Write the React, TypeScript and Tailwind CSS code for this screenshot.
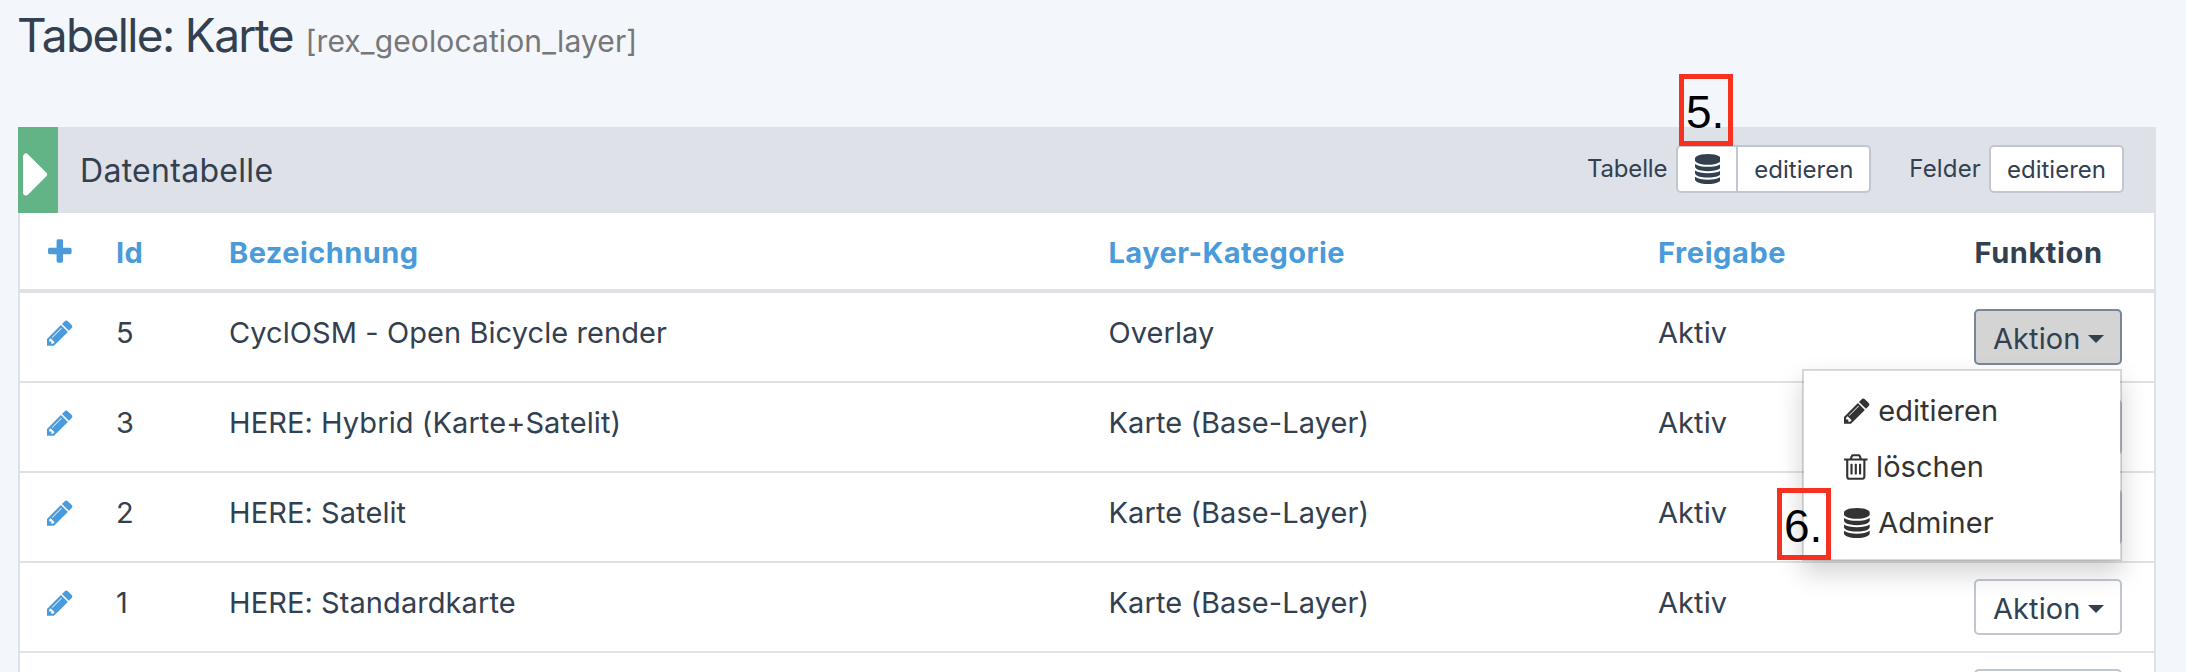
import React from "react";

function Glyph({ d, box, className }: { d: string; box: string; className: string }) {
  return (
    <svg viewBox={box} className={className} fill="currentColor" aria-hidden="true">
      <path d={d} />
    </svg>
  );
}

const PENCIL =
  "M363 1536l91-91-235-235-91 91v107h128v128h107zM886 608q0-22-22-22-10 0-17 7l-542 542q-7 7-7 17 0 22 22 22 10 0 17-7l542-542q7-7 7-17zM832 416l416 416-832 832h-416v-416zM1515 512q0 53-37 90l-166 166-416-416 166-165q36-38 90-38 53 0 91 38l235 234q37 39 37 91z";
const TRASH =
  "M704 736v576q0 14-9 23t-23 9h-64q-14 0-23-9t-9-23v-576q0-14 9-23t23-9h64q14 0 23 9t9 23zm256 0v576q0 14-9 23t-23 9h-64q-14 0-23-9t-9-23v-576q0-14 9-23t23-9h64q14 0 23 9t9 23zm256 0v576q0 14-9 23t-23 9h-64q-14 0-23-9t-9-23v-576q0-14 9-23t23-9h64q14 0 23 9t9 23zm128 724v-948h-896v948q0 22 7 40.500t14.500 27 10.500 8.500h832q3 0 10.500-8.500t14.500-27 7-40.500zm-672-1076h448l-48-117q-7-9-17-11h-317q-10 2-17 11zm928 32v64q0 14-9 23t-23 9h-96v948q0 83-47 143.500t-113 60.500h-832q-66 0-113-58.500t-47-141.500v-952h-96q-14 0-23-9t-9-23v-64q0-14 9-23t23-9h309l70-167q15-37 54-63t79-26h320q40 0 79 26t54 63l70 167h309q14 0 23 9t9 23z";
const DATABASE =
  "M896 768q237 0 443-43t325-127v170q0 69-103 128t-280 93.500-385 34.500-385-34.500-280-93.500-103-128v-170q119 84 325 127t443 43zm0 768q237 0 443-43t325-127v170q0 69-103 128t-280 93.500-385 34.500-385-34.500-280-93.500-103-128v-170q119 84 325 127t443 43zm0-384q237 0 443-43t325-127v170q0 69-103 128t-280 93.500-385 34.500-385-34.500-280-93.500-103-128v-170q119 84 325 127t443 43zm0-1152q208 0 385 34.500t280 93.500 103 128v128q0 69-103 128t-280 93.500-385 34.500-385-34.500-280-93.500-103-128v-128q0-69 103-128t280-93.500 385-34.500z";
const PLUS =
  "M1600 736v192q0 40-28 68t-68 28h-416v416q0 40-28 68t-68 28h-192q-40 0-68-28t-28-68v-416h-416q-40 0-68-28t-28-68v-192q0-40 28-68t68-28h416v-416q0-40 28-68t68-28h192q40 0 68 28t28 68v416h416q40 0 68 28t28 68z";

const Pencil = () => <Glyph d={PENCIL} box="0 0 1536 1792" className="h-[30px] w-[25.7px] shrink-0" />;
const Trash = () => <Glyph d={TRASH} box="192 0 1408 1792" className="h-[30px] w-[23.6px] shrink-0" />;
const Database = () => <Glyph d={DATABASE} box="128 0 1536 1792" className="h-[30px] w-[25.7px] shrink-0" />;
const Plus = () => <Glyph d={PLUS} box="192 0 1408 1792" className="h-[30px] w-[23.6px] shrink-0" />;

const COLS = "grid grid-cols-[96px_113px_879.500px_549.500px_1fr]";

type Row = { id: string; name: string; category: string; status: string; action?: string; open?: boolean };

const ROWS: Row[] = [
  { id: "5", name: "CyclOSM - Open Bicycle render", category: "Overlay", status: "Aktiv", action: "Aktion", open: true },
  { id: "3", name: "HERE: Hybrid (Karte+Satelit)", category: "Karte (Base-Layer)", status: "Aktiv" },
  { id: "2", name: "HERE: Satelit", category: "Karte (Base-Layer)", status: "Aktiv" },
  { id: "1", name: "HERE: Standardkarte", category: "Karte (Base-Layer)", status: "Aktiv", action: "Aktion" },
  { id: "", name: "", category: "", status: "" },
];

function Menu() {
  return (
    <ul className="absolute top-[60px] right-0 z-10 h-[192px] w-[320px] border-2 border-black/15 bg-white bg-clip-padding pt-[12px] pl-[40px] tracking-[0.05px] text-[#333] shadow-[0_12px_24px_rgba(0,0,0,0.175)]">
      <li className="flex h-14 items-center gap-[8.500px]"><Pencil /><span>editieren</span></li>
      <li className="flex h-14 items-center gap-[8.500px]"><Trash /><span>löschen</span></li>
      <li className="flex h-14 items-center gap-[8.500px]"><Database /><span>Adminer</span></li>
    </ul>
  );
}

function ActionButton({ label, open }: { label?: string; open?: boolean }) {
  return (
    <div className="relative mt-4 w-[148px]">
      <button
        className={
          open
            ? "flex h-[56px] w-full items-center rounded-[5px] border-2 border-[#76869b] bg-[#d4d4d4] pt-[3px] pl-[17px]"
            : "flex h-[56px] w-full items-center rounded-[5px] border-2 border-[#c1c7d0] bg-white pt-[3px] pl-[17px]"
        }
      >
        {label}
        {label && <svg viewBox="0 0 16 8" className="mt-px ml-[8px] h-[8px] w-[16px]" fill="currentColor"><path d="M0 0H16L8 8Z" /></svg>}
      </button>
      {open && <Menu />}
    </div>
  );
}

function TableRow({ row }: { row: Row }) {
  return (
    <div className={`${COLS} h-[90px] border-b-2 border-[#dfe1e6] leading-[40px] tracking-[0.08px]`}>
      <div className="pt-[24.500px] pl-[27px] text-[#4b9ad9]"><Pencil /></div>
      <div className="pt-[20px]">{row.id}</div>
      <div className="pt-[20px]">{row.name}</div>
      <div className="pt-[20px]">{row.category}</div>
      <div className="flex">
        <div className="w-[316px] pt-[20px]">{row.status}</div>
        <ActionButton label={row.action} open={row.open} />
      </div>
    </div>
  );
}

const TOOL_BUTTON = "flex h-[48px] items-center justify-center border-2 border-[#c1c7d0] bg-white";

export default function App() {
  return (
    <div className="relative h-[672px] w-[2186px] overflow-hidden bg-[#f3f6fb] font-['Inter',sans-serif] text-[29px] text-[#324050]">
      <h1 className="flex h-[127px] items-baseline gap-[12.500px] pt-[5px] pl-[17px] text-[46px] leading-[60px] tracking-[-1.62px]">
        Tabelle: Karte
        <small className="text-[30px] tracking-[0.12px] text-[#777]">[rex_geolocation_layer]</small>
      </h1>

      <section className="ml-[18px] w-[2138px]">
        <header className="flex h-[86px] items-center bg-[#dfe1e9]">
          <div className="flex h-full w-[40px] items-center bg-[#62b385] pt-[9px] pl-[5px]">
            <svg viewBox="0 0 24 43" className="h-[43px] w-[24px]" fill="white" stroke="white" strokeWidth="6" strokeLinejoin="round">
              <path d="M3 3.500V39.500L21 21.500Z" />
            </svg>
          </div>
          <h2 className="ml-[22px] flex-1 pt-[2px] text-[32px] leading-[40px] tracking-[0.3px]">Datentabelle</h2>
          <div className="mr-[32px] flex items-center pb-[2px] text-[24px]">
            <span className="mr-[9px] tracking-[-0.15px]">Tabelle</span>
            <button className={`${TOOL_BUTTON} w-[62px] rounded-l-[5px]`}><Database /></button>
            <button className={`${TOOL_BUTTON} -ml-[2px] w-[135px] rounded-r-[5px] pt-[1px]`}>editieren</button>
            <span className="mr-[8px] ml-[38px] tracking-[0.15px]">Felder</span>
            <button className={`${TOOL_BUTTON} w-[135px] rounded-[5px] pt-[1px]`}>editieren</button>
          </div>
        </header>

        <div className="border-x-2 border-[#dfe1e9] bg-white">
          <div className={`${COLS} h-[80px] border-b-4 border-[#dfe1e6] leading-[40px] font-bold tracking-[0.45px] text-[#4b9ad9]`}>
            <div className="pt-[24px] pl-[28px]"><Plus /></div>
            <div className="pt-[20px]">Id</div>
            <div className="pt-[20px]">Bezeichnung</div>
            <div className="pt-[20px]">Layer-Kategorie</div>
            <div className="flex pt-[20px] tracking-[0.6px]">
              <span className="w-[316.500px]">Freigabe</span>
              <span className="text-[#324050]">Funktion</span>
            </div>
          </div>
          {ROWS.map((row, i) => (
            <TableRow key={i} row={row} />
          ))}
        </div>
      </section>

      <div className="absolute top-[74px] left-[1679px] z-20 h-[72px] w-[54px] border-5 border-[#f5311f] pl-[2px] font-['Liberation_Sans',sans-serif] text-[46px] leading-[66px] text-black">5.</div>
      <div className="absolute top-[488px] left-[1777px] z-20 h-[72px] w-[54px] border-5 border-[#f5311f] pl-[2px] font-['Liberation_Sans',sans-serif] text-[46px] leading-[66px] text-black">6.</div>
    </div>
  );
}
